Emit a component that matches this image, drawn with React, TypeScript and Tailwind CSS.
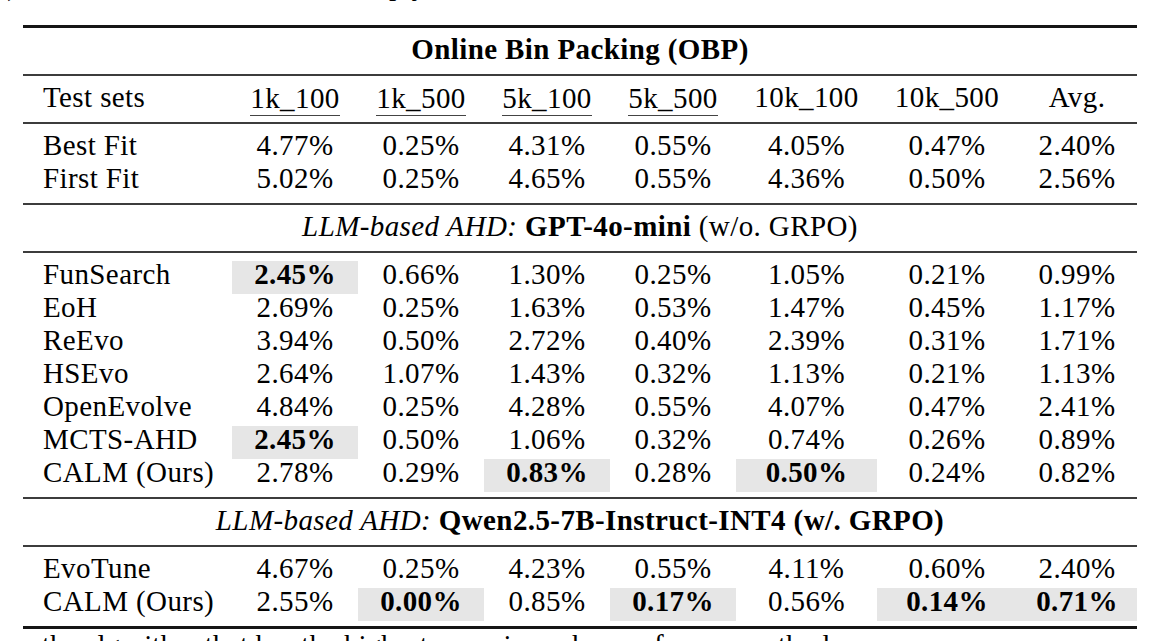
import React from "react";

// table columns: label + 7 test-set columns
const grid = "grid grid-cols-[209px_126px_126px_126px_126px_141px_140px_120px]";

const heads = ["1k_100", "1k_500", "5k_100", "5k_500", "10k_100", "10k_500", "Avg."];
const underlined = ["1k_100", "1k_500", "5k_100", "5k_500"];

// "*" marks the best value (bold on grey)
const baselines: [string, string[]][] = [
  ["Best Fit", ["4.77%", "0.25%", "4.31%", "0.55%", "4.05%", "0.47%", "2.40%"]],
  ["First Fit", ["5.02%", "0.25%", "4.65%", "0.55%", "4.36%", "0.50%", "2.56%"]],
];

const gptRows: [string, string[]][] = [
  ["FunSearch", ["*2.45%", "0.66%", "1.30%", "0.25%", "1.05%", "0.21%", "0.99%"]],
  ["EoH", ["2.69%", "0.25%", "1.63%", "0.53%", "1.47%", "0.45%", "1.17%"]],
  ["ReEvo", ["3.94%", "0.50%", "2.72%", "0.40%", "2.39%", "0.31%", "1.71%"]],
  ["HSEvo", ["2.64%", "1.07%", "1.43%", "0.32%", "1.13%", "0.21%", "1.13%"]],
  ["OpenEvolve", ["4.84%", "0.25%", "4.28%", "0.55%", "4.07%", "0.47%", "2.41%"]],
  ["MCTS-AHD", ["*2.45%", "0.50%", "1.06%", "0.32%", "0.74%", "0.26%", "0.89%"]],
  ["CALM (Ours)", ["2.78%", "0.29%", "*0.83%", "0.28%", "*0.50%", "0.24%", "0.82%"]],
];

const qwenRows: [string, string[]][] = [
  ["EvoTune", ["4.67%", "0.25%", "4.23%", "0.55%", "4.11%", "0.60%", "2.40%"]],
  ["CALM (Ours)", ["2.55%", "*0.00%", "0.85%", "*0.17%", "0.56%", "*0.14%", "*0.71%"]],
];

function TopRule() {
  return <div className="h-[3px] bg-[#151515]" />;
}

function MidRule() {
  return <div className="h-[2px] bg-[#3c3c3c]" />;
}

function Row({ label, values }: { label: string; values: string[] }) {
  return (
    <div className={grid}>
      <div className="h-[33px] pl-[20px] leading-[27px]">{label}</div>
      {values.map((v, i) => {
        const best = v.startsWith("*");
        return (
          <div
            key={i}
            className={
              best
                ? "h-[33px] bg-[#e6e6e6] text-center font-bold leading-[27px]"
                : "h-[33px] text-center leading-[27px]"
            }
          >
            {best ? v.slice(1) : v}
          </div>
        );
      })}
    </div>
  );
}

function Body({ rows }: { rows: [string, string[]][] }) {
  return (
    <div className="pt-[8px] pb-[5px]">
      {rows.map(([label, values], i) => (
        <Row key={i} label={label} values={values} />
      ))}
    </div>
  );
}

function SpanRow({ children }: { children: React.ReactNode }) {
  return (
    <div className="pt-[8px] pb-[5px]">
      <div className="h-[33px] text-center leading-[27px]">{children}</div>
    </div>
  );
}

export default function App() {
  return (
    <div className="relative h-[641px] w-[1173px] overflow-hidden bg-white font-[family-name:'Liberation_Serif',serif] text-[29px] text-black">
      {/* tail of the caption line above the table */}
      <div className="h-[25px] overflow-hidden">
        <p className="-mt-[28px] -ml-[4px] whitespace-nowrap leading-[27px]">
          s) and best results are marked simply in bold in the table
        </p>
      </div>

      <div className="ml-[23px] w-[1114px] tracking-[0.4px]">
        <TopRule />
        <SpanRow>
          <span className="font-bold">Online Bin Packing (OBP)</span>
        </SpanRow>
        <MidRule />

        <div className="pt-[8px] pb-[5px]">
          <div className={grid}>
            <div className="h-[33px] pl-[20px] leading-[27px]">Test sets</div>
            {heads.map((h) => (
              <div key={h} className="h-[33px] text-center leading-[27px]">
                {underlined.includes(h) ? (
                  <span className="inline-block border-b border-[#444] pb-[2px] leading-none">{h}</span>
                ) : (
                  h
                )}
              </div>
            ))}
          </div>
        </div>
        <MidRule />

        <Body rows={baselines} />
        <MidRule />

        <SpanRow>
          <span className="italic">LLM-based AHD:</span> <span className="font-bold">GPT-4o-mini</span> (w/o. GRPO)
        </SpanRow>
        <MidRule />

        <Body rows={gptRows} />
        <MidRule />

        <SpanRow>
          <span className="italic">LLM-based AHD:</span>{" "}
          <span className="font-bold">Qwen2.5-7B-Instruct-INT4 (w/. GRPO)</span>
        </SpanRow>
        <MidRule />

        <Body rows={qwenRows} />
        <TopRule />
      </div>

      {/* first line of the text below the table */}
      <p className="mt-[3px] whitespace-nowrap pl-[42px] leading-[27px]">
        the algorithm that has the highest score in each run of every method
      </p>
    </div>
  );
}
